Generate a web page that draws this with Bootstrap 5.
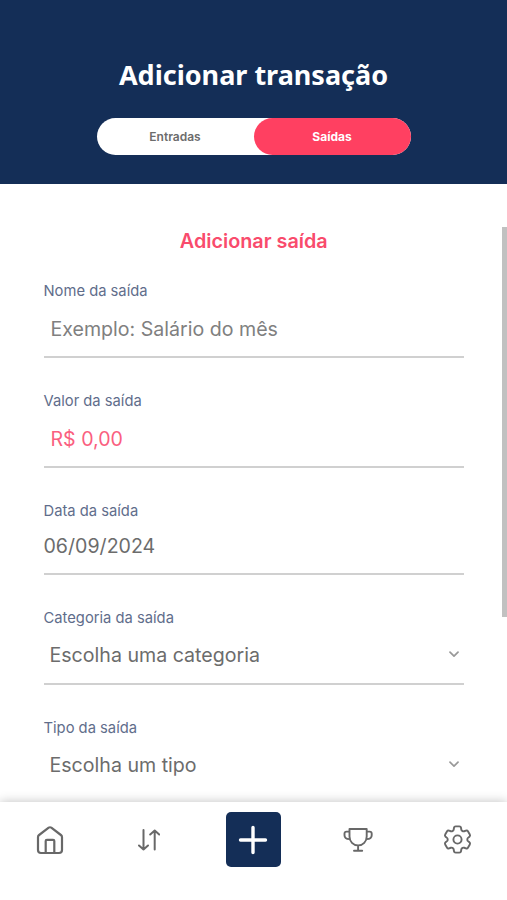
<!DOCTYPE html>
<html lang="pt-BR">
<head>
<meta charset="utf-8">
<meta name="viewport" content="width=device-width, initial-scale=1">
<title>Adicionar transação</title>
<link href="https://cdn.jsdelivr.net/npm/bootstrap@5.3.0/dist/css/bootstrap.min.css" rel="stylesheet">
<style>
body{font-family:Inter,"Liberation Sans",sans-serif;height:900px;background:#fff}
.top-bar{height:184px;background:#142e57;padding-top:57px}
.top-bar h1{font:700 27px/36px "Noto Sans","Open Sans",sans-serif;margin-bottom:25px}
.switch{width:314px;height:37px}
.switch .btn{font-size:12px;font-weight:600;color:#6c6c6c;border:0;padding:1px 0 0}
.switch .btn.active{background:#ff4061;color:#fff;font-weight:700}
.scroller{padding:43px 38px 0 43.5px;height:618px}
.scroller h2{font-size:19.8px;line-height:28px;font-weight:600;color:#f94b6c;margin:0 0 10px}
.thumb{width:5px;height:390px;margin-top:43px;background:#c1c1c1}
.field{height:77px;margin-bottom:33px;border-bottom:2px solid #d0d0d0}
.field:last-child{border-color:transparent}
.field label{font-size:14.75px;line-height:20px;color:#5f6d8b;flex:none}
.field .form-control{font-size:19.6px;line-height:28px;color:#6c6c6c;padding:1px 7px 0;border:0;background:none;flex:1;min-height:0;text-align:left}
.field .form-control::placeholder{color:#808080;opacity:1}
.field .amount::placeholder{color:#fa5f7f}
.field.date{height:73.5px}
.field.date .form-control{padding:0 0 2px}
.field .picker{padding:0 5px 1px 6px}
.dock{height:98px;background:#fff;box-shadow:0 0 10px rgba(0,0,0,.25);display:grid;grid-template-columns:100px 98px 110px 100px 99px;padding-top:10px;position:relative}
.dock a{height:55px}
.dock svg,.picker svg{fill:none;stroke:#686868;stroke-linecap:round;stroke-linejoin:round;flex:none}
.plus{width:55px;height:55px;background:#142e57;border-radius:5px}
.dock .plus svg{stroke:#fff}
</style>
</head>
<body class="d-flex flex-column overflow-hidden">
<header class="top-bar d-flex flex-column align-items-center flex-shrink-0">
  <h1 class="text-white">Adicionar transação</h1>
  <div class="switch d-flex bg-white rounded-pill">
    <button class="btn rounded-pill w-50">Entradas</button>
    <button class="btn rounded-pill w-50 active">Saídas</button>
  </div>
</header>
<main class="d-flex flex-shrink-0">
  <form class="scroller flex-grow-1 overflow-hidden">
    <h2 class="text-center" id="heading">Adicionar saída</h2>
    <div class="pt-3">
    <div class="field d-flex flex-column">
      <label for="nome">Nome da saída</label>
      <input id="nome" class="form-control rounded-0" placeholder="Exemplo: Salário do mês">
    </div>
    <div class="field d-flex flex-column">
      <label for="valor">Valor da saída</label>
      <input id="valor" class="form-control rounded-0 amount" placeholder="R$ 0,00">
    </div>
    <div class="field date d-flex flex-column">
      <label for="data">Data da saída</label>
      <input id="data" class="form-control rounded-0" value="06/09/2024">
    </div>
    <div class="field d-flex flex-column">
      <label for="categoria">Categoria da saída</label>
      <button type="button" id="categoria" class="form-control rounded-0 picker d-flex align-items-center justify-content-between">Escolha uma categoria
        <svg width="10" height="7" viewBox="0 0 10 7" stroke-width="1.7"><path d="M1 1.2l4 4 4-4" stroke="#999"/></svg></button>
    </div>
    <div class="field d-flex flex-column">
      <label for="tipo">Tipo da saída</label>
      <button type="button" id="tipo" class="form-control rounded-0 picker d-flex align-items-center justify-content-between">Escolha um tipo
        <svg width="10" height="7" viewBox="0 0 10 7" stroke-width="1.7"><path d="M1 1.2l4 4 4-4" stroke="#999"/></svg></button>
    </div>
    </div>
  </form>
  <div class="thumb flex-shrink-0"></div>
</main>
<nav class="dock flex-shrink-0">
  <a href="#" class="d-flex align-items-center justify-content-center" aria-label="Início">
    <svg width="28" height="30" viewBox="0 0 28 30" stroke-width="2.2"><path d="M2 12.2Q2 10.8 3.1 10L12.7 2.7Q14 1.8 15.3 2.7L24.9 10Q26 10.8 26 12.2V25Q26 28 23 28H5Q2 28 2 25ZM9.7 28V16Q9.7 14.8 10.9 14.8H17.1Q18.300 14.800 18.300 16V28"/></svg></a>
  <a href="#" class="d-flex align-items-center justify-content-center" aria-label="Transações">
    <svg width="22" height="22" viewBox="0 0 22 22" stroke-width="2"><path d="M5.500 1V20.500M1 16.500L5.500 20.500L10 16.500M16.700 20.500V1.500M12.200 5.500L16.700 1.500L21.200 5.500"/></svg></a>
  <a href="#" class="d-flex align-items-center justify-content-center" aria-label="Adicionar">
    <span class="plus d-flex align-items-center justify-content-center"><svg width="30" height="30" viewBox="0 0 30 30" stroke-width="3.400"><path d="M15 2.500V27.500M2.500 15H27.500"/></svg></span></a>
  <a href="#" class="d-flex align-items-center justify-content-center" aria-label="Metas">
    <svg width="30" height="26" viewBox="0 0 30 26" stroke-width="1.900"><path d="M6.500 2H23.700V9.500C23.700 14.500 20 18.400 15.100 18.400S6.500 14.500 6.500 9.500ZM15.100 18.400V23.800M11 23.800H19.200M6.500 4.600H3.500Q1.500 4.600 1.500 6.600V8.200Q1.500 12 6.500 12.100M23.700 4.600H26.700Q28.700 4.600 28.700 6.600V8.200Q28.700 12 23.700 12.100"/></svg></a>
  <a href="#" class="d-flex align-items-center justify-content-center" aria-label="Configurações">
    <svg width="35" height="35" viewBox="0 0 24 24" stroke-width="1.3"><path d="M9.594 3.94c.09-.542.56-.94 1.11-.94h2.593c.55 0 1.02.398 1.11.94l.213 1.281c.063.374.313.686.645.87.074.04.147.083.22.127.325.196.72.257 1.075.124l1.217-.456a1.125 1.125 0 0 1 1.37.49l1.296 2.247a1.125 1.125 0 0 1-.26 1.431l-1.003.827c-.293.241-.438.613-.43.992a7.723 7.723 0 0 1 0 .255c-.008.378.137.75.43.991l1.004.827c.424.35.534.955.26 1.43l-1.298 2.247a1.125 1.125 0 0 1-1.369.491l-1.217-.456c-.355-.133-.75-.072-1.076.124a6.47 6.47 0 0 1-.22.128c-.331.183-.581.495-.644.869l-.213 1.281c-.09.543-.56.94-1.11.94h-2.594c-.55 0-1.019-.398-1.11-.94l-.213-1.281c-.062-.374-.312-.686-.644-.87a6.52 6.52 0 0 1-.22-.127c-.325-.196-.72-.257-1.076-.124l-1.217.456a1.125 1.125 0 0 1-1.369-.49l-1.297-2.247a1.125 1.125 0 0 1 .26-1.431l1.004-.827c.292-.24.437-.613.43-.991a6.932 6.932 0 0 1 0-.255c.007-.38-.138-.751-.43-.992l-1.004-.827a1.125 1.125 0 0 1-.26-1.43l1.297-2.247a1.125 1.125 0 0 1 1.37-.491l1.216.456c.356.133.751.072 1.076-.124.072-.044.146-.086.22-.128.332-.183.582-.495.644-.869l.214-1.28Z"/><circle cx="12" cy="12" r="2.800"/></svg></a>
</nav>
<script src="https://cdn.jsdelivr.net/npm/bootstrap@5.3.0/dist/js/bootstrap.bundle.min.js"></script>
</body>
</html>
